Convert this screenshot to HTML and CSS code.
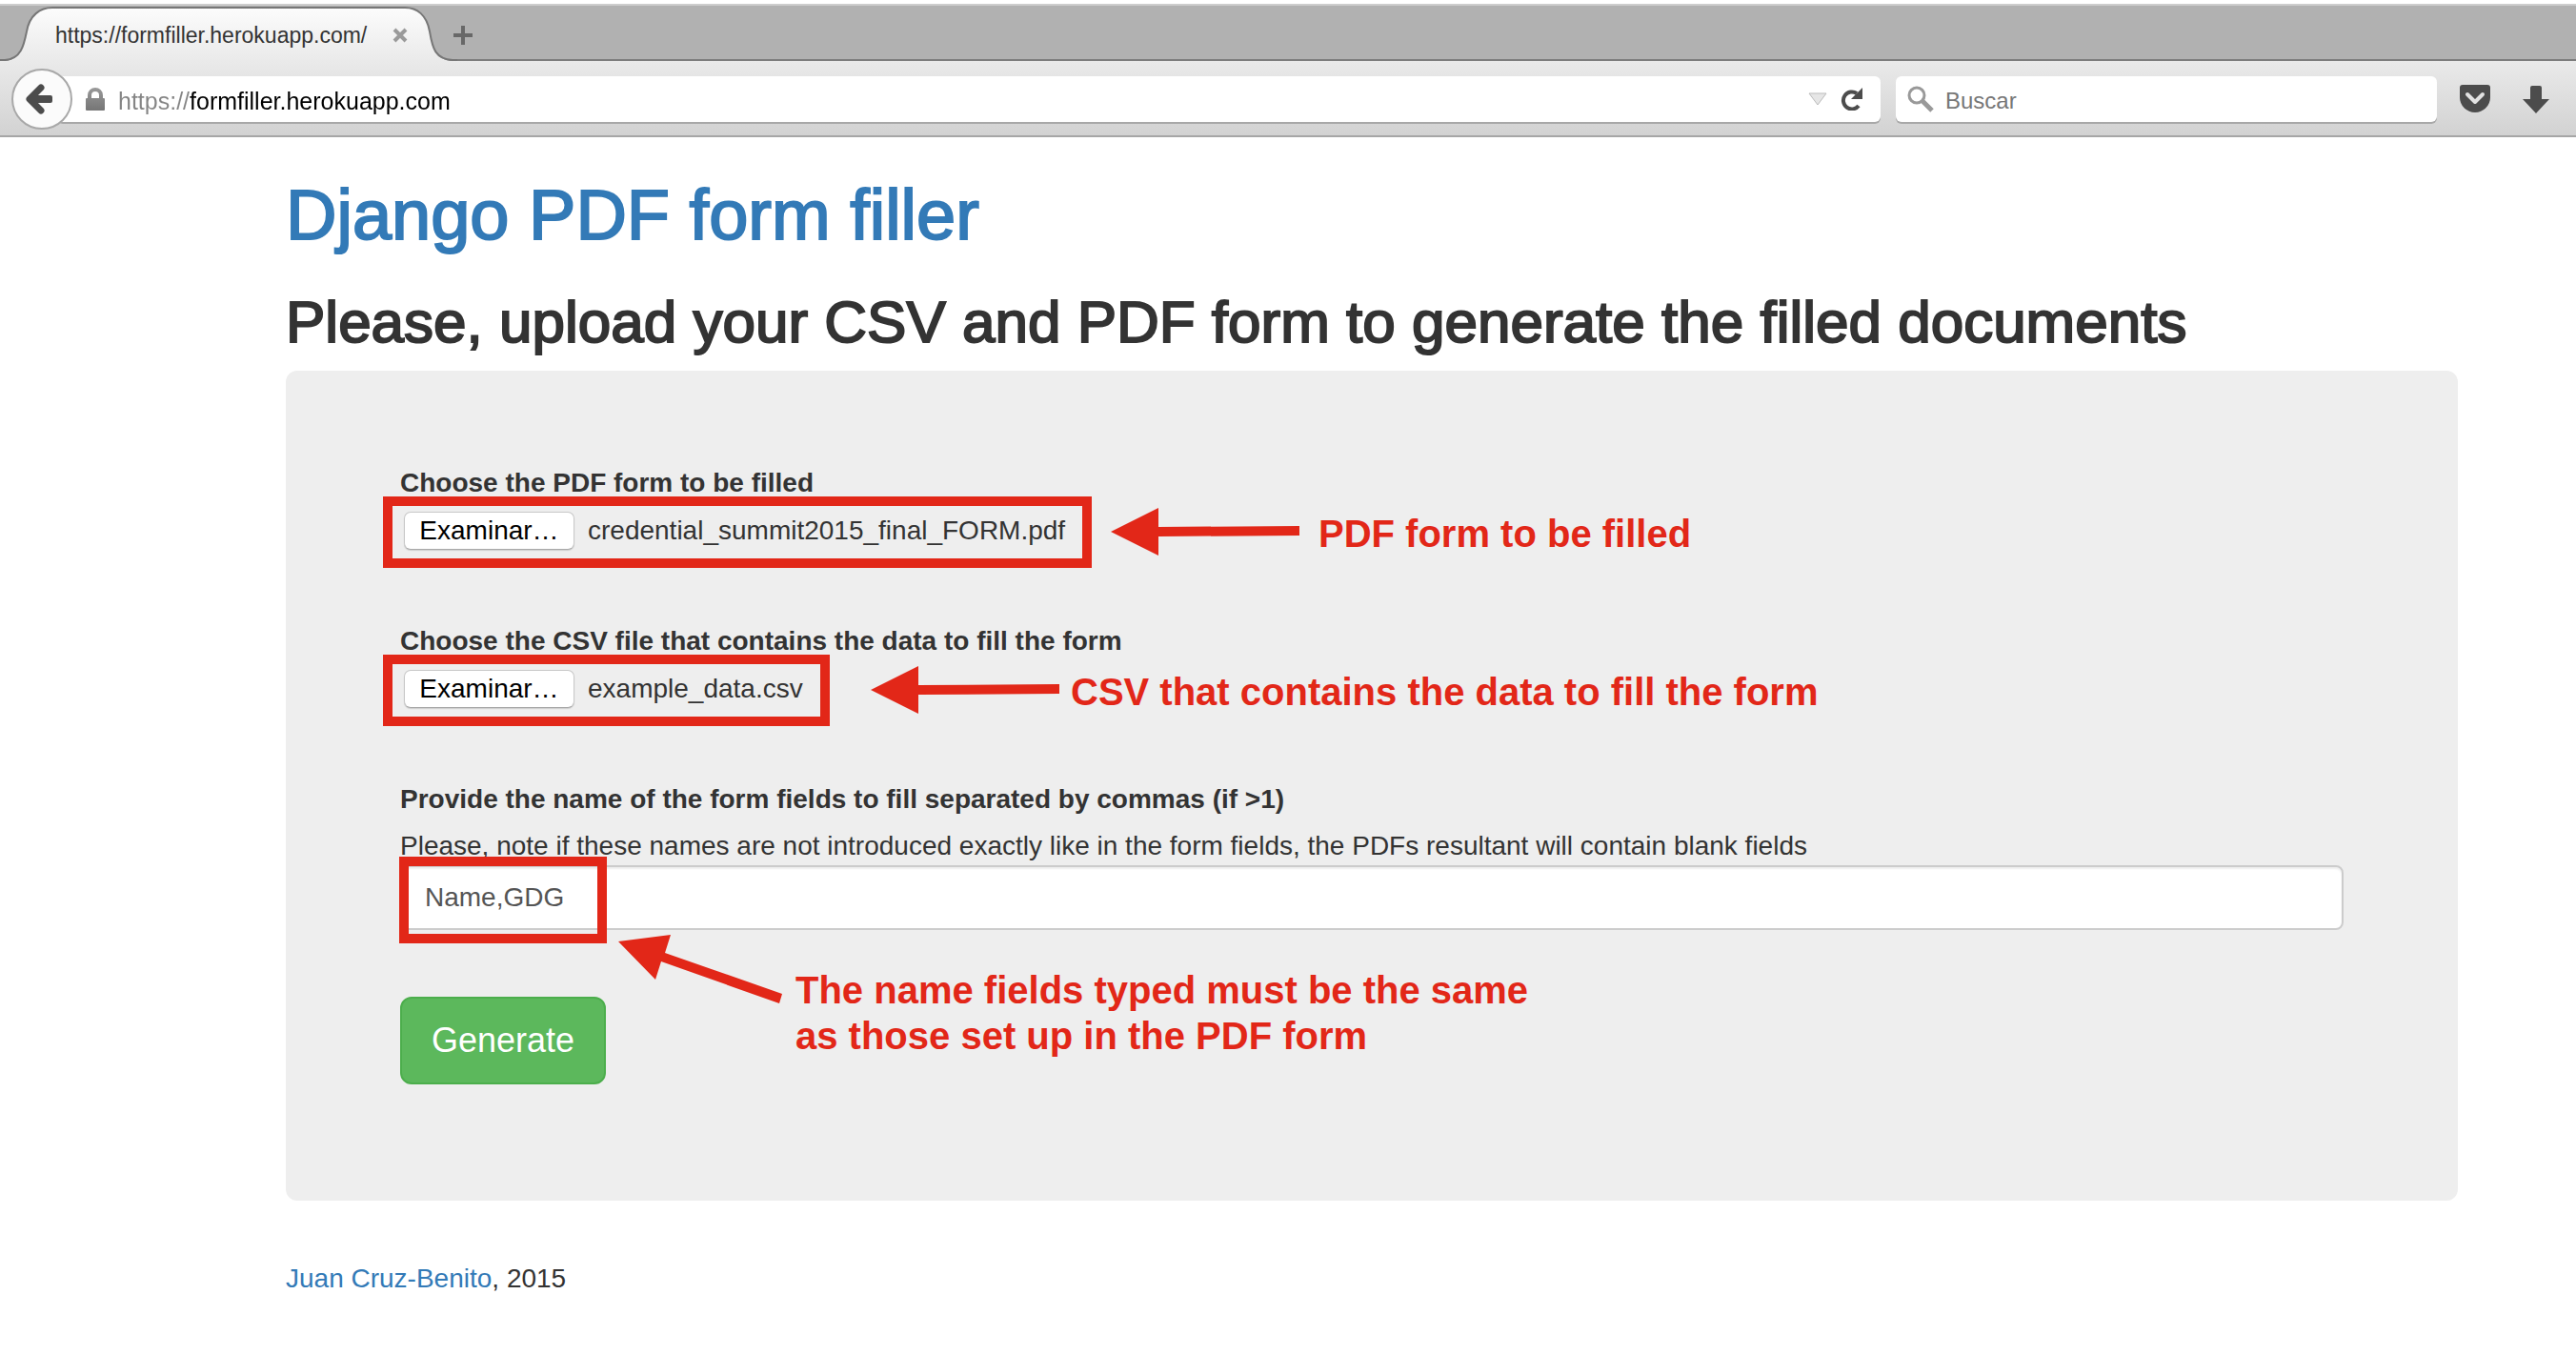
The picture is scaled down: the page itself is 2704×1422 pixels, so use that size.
FILE: index.html
```html
<!DOCTYPE html>
<html lang="en">
<head>
<meta charset="utf-8">
<title>Django PDF form filler</title>
<link rel="stylesheet" href="styles.css">
</head>
<body>
<header class="browser">
  <div class="tabstrip">
    <div class="tab">
      <svg class="tab-shape" viewBox="0 0 480 60" aria-hidden="true">
        <defs>
          <linearGradient id="tabfill" x1="0" y1="0" x2="0" y2="1">
            <stop offset="0" stop-color="#fcfcfc"/>
            <stop offset="1" stop-color="#eaeaea"/>
          </linearGradient>
        </defs>
        <path fill="url(#tabfill)" d="M5 60C22 59 25 44 28 29C31 12 42 4 55 4H425C438 4 448 12 451 29C454 47 457 59 475 60Z"/>
        <path fill="none" stroke="#777" stroke-width="2" d="M0 59H5C22 58 25 44 28 29C31 12 42 4 55 4H425C438 4 448 12 451 29C454 47 457 58 475 59H480"/>
      </svg>
      <span class="tab-title">https://formfiller.herokuapp.com/</span>
      <button class="icon-button" type="button" aria-label="Close tab">
        <svg width="16" height="16" viewBox="0 0 16 16"><path d="M2 2L14 14M14 2L2 14" stroke="#9a9a9a" stroke-width="4"/></svg>
      </button>
    </div>
    <button class="icon-button" type="button" aria-label="New tab">
      <svg width="20" height="20" viewBox="0 0 20 20"><path d="M10 0V20M0 10H20" stroke="#686868" stroke-width="4"/></svg>
    </button>
  </div>
  <div class="toolbar">
    <button class="back" type="button" aria-label="Back">
      <svg width="30" height="32" viewBox="0 0 30 32"><path d="M16 4L4 16L16 28" fill="none" stroke="#4c4c4c" stroke-width="7" stroke-linecap="round" stroke-linejoin="round"/><path d="M6 12H26Q28 12 28 14V18Q28 20 26 20H6Z" fill="#4c4c4c"/></svg>
    </button>
    <div class="urlbar">
      <svg width="20" height="24" viewBox="0 0 20 24" aria-hidden="true"><defs><linearGradient id="lock" x1="0" y1="0" x2="0" y2="1"><stop offset="0" stop-color="#999"/><stop offset="1" stop-color="#757575"/></linearGradient></defs><path fill="url(#lock)" fill-rule="evenodd" d="M2 11V8A8 8 0 0 1 18 8V11H19Q20 11 20 12V23Q20 24 19 24H1Q0 24 0 23V12Q0 11 1 11ZM6 11H14V8A4 4 0 0 0 6 8Z"/></svg>
      <input class="url" type="text" aria-label="Address" value="https://formfiller.herokuapp.com">
      <button class="icon-button" type="button" aria-label="Show history">
        <svg width="20" height="14" viewBox="0 0 20 14"><path d="M1 1H19L10 13Z" fill="#e6e6e6" stroke="#bbb"/></svg>
      </button>
      <button class="icon-button" type="button" aria-label="Reload">
        <svg width="24" height="24" viewBox="0 0 24 24"><path d="M17 6A9 9 0 1 0 19 19" fill="none" stroke="#4c4c4c" stroke-width="4"/><path d="M23 0V12H11Z" fill="#4c4c4c"/></svg>
      </button>
    </div>
    <div class="searchbar">
      <svg width="28" height="28" viewBox="0 0 28 28" aria-hidden="true"><circle cx="10" cy="10" r="8" fill="none" stroke="#999" stroke-width="3"/><path d="M16 16L26 26" stroke="#999" stroke-width="5"/></svg>
      <input class="search" type="search" aria-label="Search" placeholder="Buscar">
    </div>
    <button class="icon-button" type="button" aria-label="Save to Pocket">
      <svg width="32" height="30" viewBox="0 0 32 30"><path d="M3 0H29Q32 0 32 3V13A16 16 0 0 1 0 13V3Q0 0 3 0Z" fill="#4c4c4c"/><path d="M8 10L16 18L24 10" fill="none" stroke="#e2e2e2" stroke-width="4" stroke-linecap="round" stroke-linejoin="round"/></svg>
    </button>
    <button class="icon-button" type="button" aria-label="Downloads">
      <svg width="28" height="29" viewBox="0 0 28 29"><path d="M10 0H18Q20 0 20 2V14H28L14 29L0 14H8V2Q8 0 10 0Z" fill="#4c4c4c"/></svg>
    </button>
  </div>
</header>

<main class="container">
  <h1><a href="/">Django PDF form filler</a></h1>
  <h2>Please, upload your CSV and PDF form to generate the filled documents</h2>
  <form class="panel">
    <div class="field">
      <label for="pdf">Choose the PDF form to be filled</label>
      <div class="picker">
        <input class="file" id="pdf" type="file" accept=".pdf" tabindex="-1">
        <button class="browse" type="button">Examinar…</button>
        <span>credential_summit2015_final_FORM.pdf</span>
      </div>
      <div class="marker marker-pdf"></div>
      <div class="callout callout-pdf">
        <svg width="198" height="50" viewBox="0 0 198 50" aria-hidden="true"><path d="M0 25L50 0V20L198 19V29L50 30V50Z"/></svg>
        <p>PDF form to be filled</p>
      </div>
    </div>
    <div class="field">
      <label for="csv">Choose the CSV file that contains the data to fill the form</label>
      <div class="picker">
        <input class="file" id="csv" type="file" accept=".csv" tabindex="-1">
        <button class="browse" type="button">Examinar…</button>
        <span>example_data.csv</span>
      </div>
      <div class="marker marker-csv"></div>
      <div class="callout callout-csv">
        <svg width="198" height="50" viewBox="0 0 198 50" aria-hidden="true"><path d="M0 25L50 0V20L198 19V29L50 30V50Z"/></svg>
        <p>CSV that contains the data to fill the form</p>
      </div>
    </div>
    <div class="field">
      <label for="names">Provide the name of the form fields to fill separated by commas (if &gt;1)</label>
      <p class="hint">Please, note if these names are not introduced exactly like in the form fields, the PDFs resultant will contain blank fields</p>
      <input class="names" id="names" type="text" value="Name,GDG">
      <div class="marker marker-names"></div>
      <div class="callout callout-names">
        <svg width="172" height="72" viewBox="0 0 172 72" aria-hidden="true"><path d="M0 7L55 0L49 19L172 62L169 72L45 28L39 47Z"/></svg>
        <p>The name fields typed must be the same<br>as those set up in the PDF form</p>
      </div>
    </div>
    <button class="generate" type="submit">Generate</button>
  </form>
  <footer><a href="/about">Juan Cruz-Benito</a>, 2015</footer>
</main>
</body>
</html>
```
FILE: styles.css
```css
* { box-sizing: border-box; }

body {
  margin: 0;
  background: #fff;
  color: #333;
  font: 28px/40px "Liberation Sans", Arial, sans-serif;
}

h1, h2, p { margin: 0; }
a { color: #337ab7; text-decoration: none; }
svg { display: block; flex: none; }
button, input { font: inherit; }

.icon-button {
  padding: 0;
  border: 0;
  background: none;
}

/* Browser window */
.browser { padding-top: 4px; }

.tabstrip {
  display: flex;
  align-items: flex-start;
  height: 60px;
  border-top: 2px solid #cdcdcd;
  background: linear-gradient(#b1b1b1 56px, #7d7d7d 56px);
}

.tabstrip > .icon-button { margin-top: 21px; }

.tab {
  position: relative;
  display: flex;
  align-items: center;
  justify-content: space-between;
  width: 476px;
  height: 58px;
  padding: 4px 48px 0 58px;
  font-size: 23px;
}

.tab-shape {
  position: absolute;
  left: 0;
  top: -2px;
  width: 480px;
  height: 60px;
}

.tab-title, .tab .icon-button { position: relative; }

.toolbar {
  display: flex;
  align-items: center;
  height: 80px;
  padding: 2px 28px 0 12px;
  border-bottom: 2px solid #a6a6a6;
  background: linear-gradient(#eaeaea, #d2d2d2);
  font-size: 24px;
}

.toolbar > .icon-button { margin-left: 24px; }
.toolbar > .icon-button + .icon-button { margin-left: 34px; }

.back {
  position: relative;
  display: flex;
  align-items: center;
  justify-content: center;
  width: 64px;
  height: 64px;
  padding: 0 4px 0 0;
  border: 2px solid #a8a8a8;
  border-radius: 50%;
  background: #fbfbfb;
}

.urlbar, .searchbar {
  display: flex;
  align-items: center;
  height: 48px;
  border-radius: 6px;
  background: #fff;
  box-shadow: 0 2px 0 #a8a8a8;
}

.urlbar {
  flex: 1;
  gap: 14px;
  margin-left: -16px;
  padding: 0 18px 0 30px;
}

.url, .search {
  flex: 1;
  min-width: 0;
  padding: 3px 0 0;
  border: 0;
  outline: 0;
}

/* The scheme is dimmed, the host is black */
.url {
  background: linear-gradient(90deg, #858585 75px, #000 75px);
  background-clip: text;
  -webkit-background-clip: text;
  -webkit-text-fill-color: transparent;
  font-size: 25px;
}

.searchbar {
  flex: 0 1 568px;
  gap: 12px;
  margin-left: 16px;
  padding: 0 12px;
}

.search { background: none; }
.search::placeholder { color: #777; opacity: 1; }

/* Page */
.container { padding: 42px 124px 40px 300px; }

h1 {
  font-size: 74px;
  line-height: 80px;
  font-weight: 500;
}

h2 {
  margin: 39px 0 18px;
  font-size: 62px;
  line-height: 66px;
  font-weight: 500;
}

h1, h2 { -webkit-text-stroke: 2px; }

.panel {
  padding: 98px 120px 122px;
  border-radius: 12px;
  background: #eee;
}

.field { position: relative; margin-bottom: 75px; }
.field:last-of-type { margin-bottom: 70px; }

label {
  display: block;
  margin-bottom: 9px;
  font-weight: 700;
}

.picker {
  position: relative;
  display: flex;
  align-items: center;
  gap: 14px;
  height: 42px;
  padding-left: 4px;
}

.file {
  position: absolute;
  width: 1px;
  height: 1px;
  opacity: 0;
}

.browse {
  width: 179px;
  height: 40px;
  padding: 0;
  border: 1px solid #c8c8c8;
  border-bottom-color: #a8a8a8;
  border-radius: 7px;
  background: #fff;
  box-shadow: 0 1px 1px #ccc;
  line-height: 36px;
  color: #000;
}

.names {
  display: block;
  width: 100%;
  height: 68px;
  padding: 12px 24px;
  border: 2px solid #ccc;
  border-radius: 8px;
  background: #fff;
  box-shadow: inset 0 2px 2px #eee;
  color: #555;
}

.generate {
  display: block;
  width: 216px;
  height: 92px;
  border: 2px solid #4cae4c;
  border-radius: 12px;
  background: #5cb85c;
  color: #fff;
  font-size: 36px;
}

footer { margin-top: 62px; }

/* Red annotations drawn over the form */
.marker {
  position: absolute;
  left: -18px;
  top: 34px;
  height: 75px;
  border: 10px solid #e22718;
}

.marker-pdf { width: 744px; }
.marker-csv { width: 469px; }
.marker-names { left: -1px; top: 80px; width: 218px; height: 91px; }

.callout {
  position: absolute;
  display: flex;
  align-items: flex-start;
  color: #e22718;
  font-size: 40px;
  line-height: 48px;
  font-weight: 700;
  white-space: nowrap;
}

.callout svg { fill: #e22718; }
.callout p { padding-top: 3px; }
.callout-pdf { left: 746px; top: 46px; gap: 20px; }
.callout-csv { left: 494px; top: 46px; gap: 12px; }
.callout-names { left: 229px; top: 162px; gap: 14px; }
.callout-names p { padding-top: 34px; }
```
